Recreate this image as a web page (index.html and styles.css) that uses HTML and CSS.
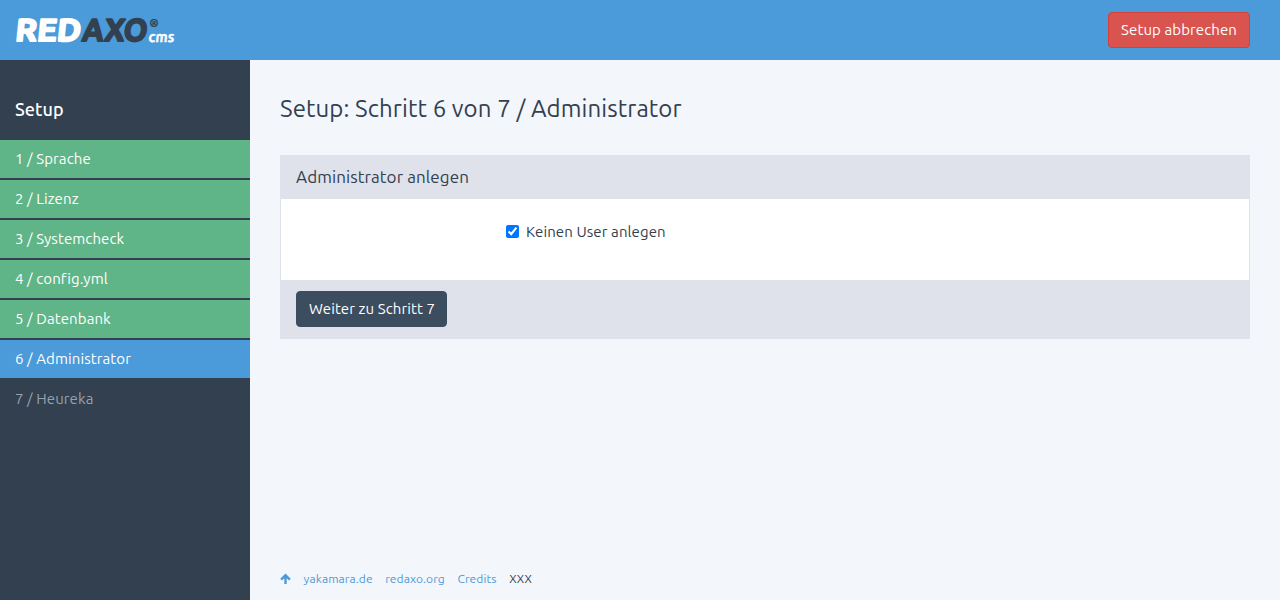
FILE: index.html
```html
<!DOCTYPE html>
<html lang="de">
<head>
<meta charset="utf-8">
<title>Setup – REDAXO</title>
<link rel="stylesheet" href="styles.css">
</head>
<body>
<header class="topbar">
  <svg class="logo" width="160" height="26" viewBox="0 0 160 26" role="img" aria-label="REDAXO CMS">
    <g class="logo-word" transform="translate(0 24) skewX(-6)">
      <text class="logo-red" x="-0.5" y="0" textLength="65.5" lengthAdjust="spacingAndGlyphs">RED</text>
      <text class="logo-axo" x="66.5" y="0" textLength="65" lengthAdjust="spacingAndGlyphs">AXO</text>
    </g>
    <text class="logo-reg" x="134.5" y="9.8">®</text>
    <text class="logo-cms" transform="translate(133 24.6) skewX(-6)" x="0" y="0" textLength="26" lengthAdjust="spacingAndGlyphs">cms</text>
  </svg>
  <button class="btn btn-danger" type="button">Setup abbrechen</button>
</header>
<div class="layout">
  <nav class="sidebar">
    <h4 class="nav-title">Setup</h4>
    <ul class="steps">
      <li class="step done">1 / Sprache</li>
      <li class="step done">2 / Lizenz</li>
      <li class="step done">3 / Systemcheck</li>
      <li class="step done">4 / config.yml</li>
      <li class="step done">5 / Datenbank</li>
      <li class="step active">6 / Administrator</li>
      <li class="step">7 / Heureka</li>
    </ul>
  </nav>
  <main class="content">
    <h1 class="page-title">Setup: Schritt 6 von 7 / Administrator</h1>
    <section class="panel">
      <header class="panel-head">Administrator anlegen</header>
      <div class="panel-body">
        <label class="check"><input type="checkbox" checked><span>Keinen User anlegen</span></label>
      </div>
      <footer class="panel-foot"><button class="btn btn-save" type="button">Weiter zu Schritt 7</button></footer>
    </section>
    <footer class="page-foot">
      <svg class="up" width="11" height="12" viewBox="0 0 11 12"><path d="M5.5 11V2.5M1.1 6.7 5.5 2.3 9.9 6.7"/></svg>
      <a>yakamara.de</a><a>redaxo.org</a><a>Credits</a><span>XXX</span>
    </footer>
  </main>
</div>
</body>
</html>
```
FILE: styles.css
```css
* { box-sizing: border-box; }
body { margin: 0; height: 600px; overflow: hidden; display: flex; flex-direction: column; background: #f3f6fb; color: #324050; font: 15px/20px Ubuntu, "Noto Sans", sans-serif; letter-spacing: .1px; }
.topbar { height: 60px; flex: none; display: flex; align-items: center; justify-content: space-between; padding: 0 30px 0 15px; background: #4b9ad9; }
.logo { overflow: visible; letter-spacing: 0; }
.logo-word { font: 700 31.5px Ubuntu, sans-serif; stroke-width: 2; stroke-linejoin: round; }
.logo-red, .logo-cms { fill: #fff; stroke: #fff; }
.logo-axo, .logo-reg { fill: #324050; stroke: #324050; }
.logo-cms { font: 700 15px Ubuntu, sans-serif; stroke-width: .3; }
.logo-reg { font: italic 700 11px Ubuntu, sans-serif; stroke-width: .2; }
.btn { height: 36px; padding: 0 12px; border: 1px solid; border-radius: 4px; color: #fff; font: inherit; letter-spacing: inherit; white-space: nowrap; }
.btn-danger { width: 142px; background: #d9534f; border-color: #d43f3a; }
.btn-save { width: 151px; background: #3c4d60; border-color: #3c4d60; }
.layout { flex: 1; display: flex; }
.sidebar { width: 250px; flex: none; background: #324050; color: #fff; }
.nav-title { margin: 0; height: 80px; padding: 39px 15px 0; font-size: 18px; font-weight: 500; }
.steps { list-style: none; margin: 0; padding: 0; display: grid; gap: 2px; }
.step { height: 38px; padding: 9px 15px; color: #96a0ae; }
.done { background: #5fb587; color: #fff; }
.active { background: #4b9ad9; color: #fff; }
.content { flex: 1; display: flex; flex-direction: column; padding: 0 30px; }
.page-title { margin: 0; padding-top: 33px; height: 95px; font-size: 24px; line-height: 32px; font-weight: 400; }
.panel { border: 1px solid #dfe2ea; height: 184px; background: #fff; }
.panel-head { height: 43px; padding: 11px 15px; background: #dfe2ea; font-size: 17px; }
.panel-body { height: 81px; padding: 22px 225px; }
.check { display: flex; align-items: flex-start; height: 20px; gap: 7px; line-height: 22px; }
.check input { width: 13px; height: 13px; margin: 4px 0 0; }
.panel-foot { height: 58px; padding: 11px 15px; background: #dfe2ea; }
.page-foot { margin-top: auto; height: 43px; padding-top: 12px; display: flex; gap: 12.6px; font-size: 12px; line-height: 20px; }
.page-foot a { color: #4b9ad9; }
.up { margin-top: 4px; fill: none; stroke: #4b9ad9; stroke-width: 2.4; }
```
